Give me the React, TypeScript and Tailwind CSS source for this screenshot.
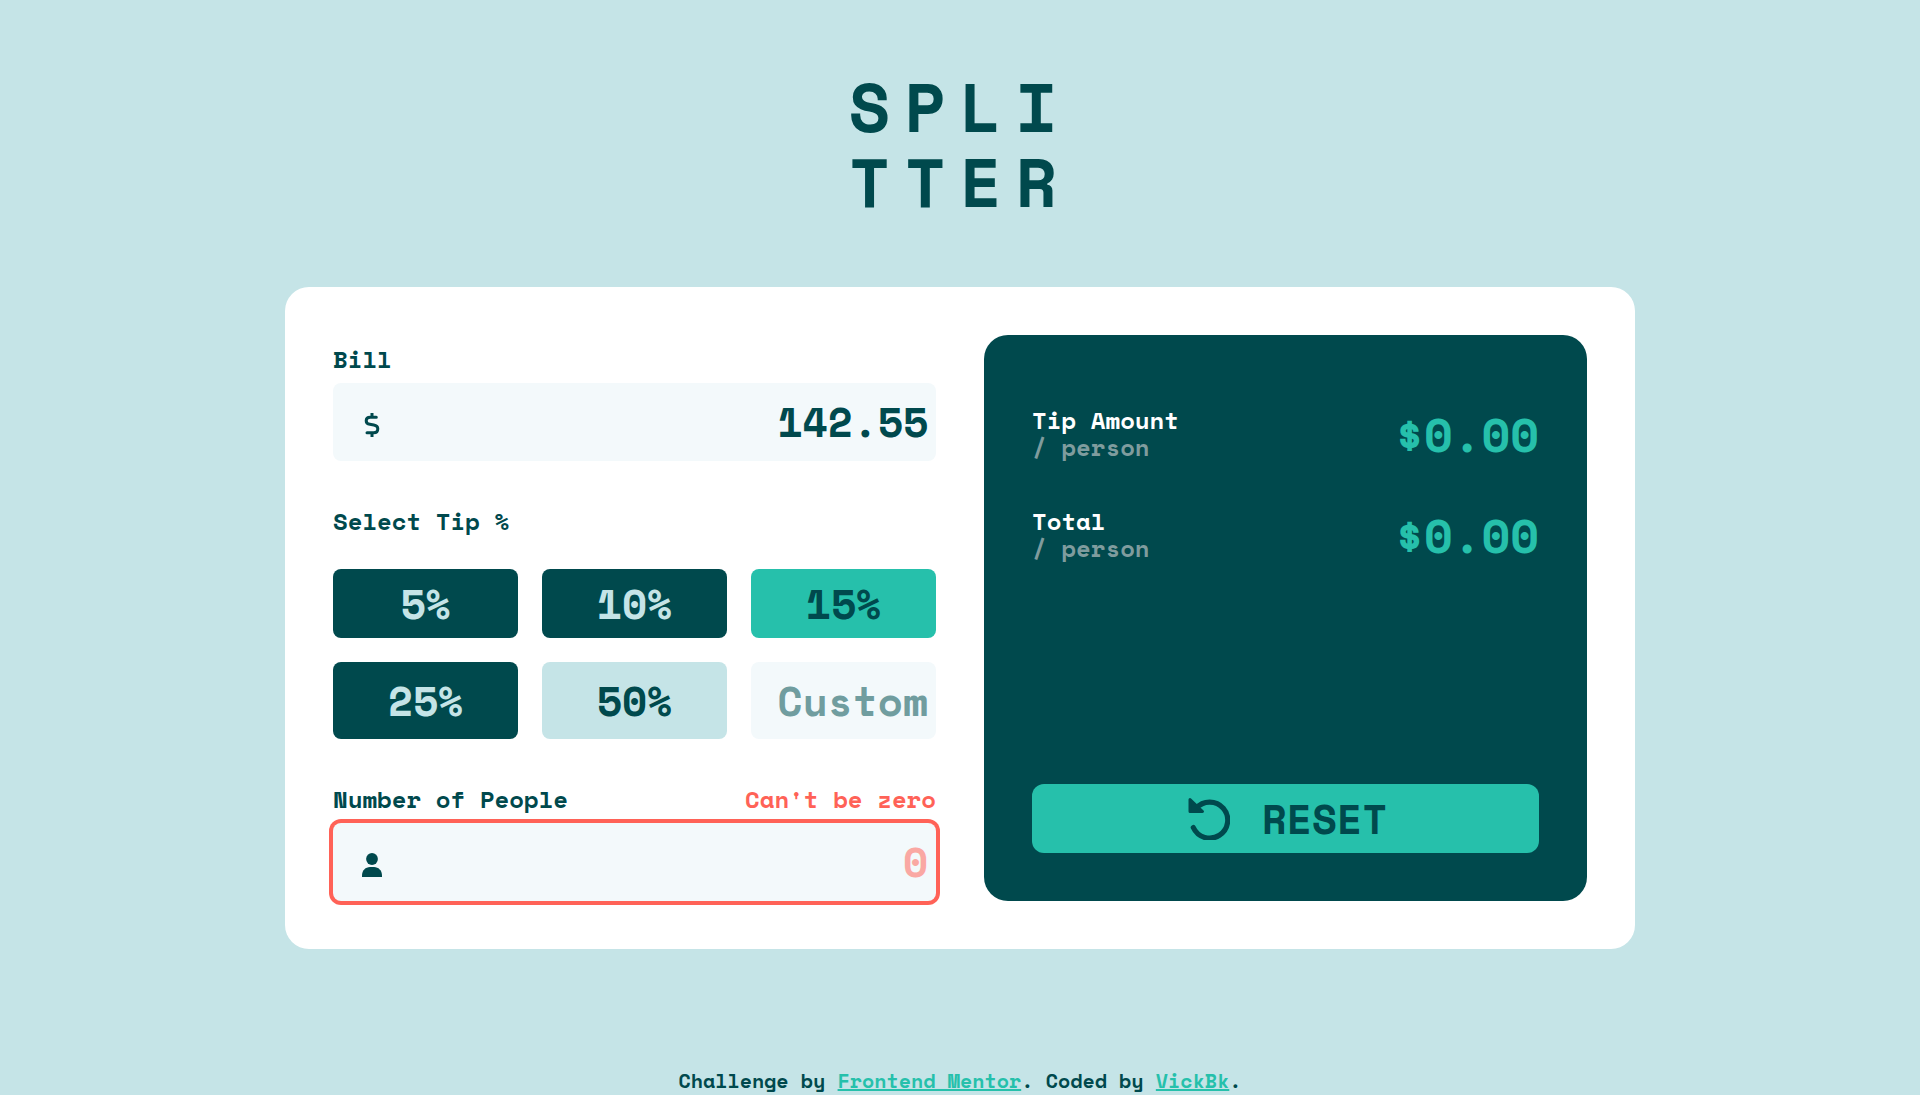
import { useState } from "react";
import type { ReactNode } from "react";

const TIPS = [5, 10, 15, 25, 50];

const TIP_STYLES: Record<string, string> = {
  normal: "bg-[#00494d] text-[#c5e4e7] hover:bg-[#c5e4e7] hover:text-[#00494d]",
  active: "bg-[#26c0ab] text-[#00494d]",
  light: "bg-[#c5e4e7] text-[#00494d]",
};

const FIELD =
  "w-full rounded-lg bg-[#f3f9fb] py-2 pr-2 text-right text-[41px] text-[#00494d] outline-none";

function DollarIcon() {
  return (
    <svg viewBox="0 0 16 24" className="h-6 w-4" fill="none" stroke="currentColor" strokeWidth="3" strokeLinecap="round" strokeLinejoin="round" aria-hidden="true">
      <path d="M12.300 4.200H6.200C3.600 4.200 2.200 5.700 2.200 7.700c0 2.100 1.400 3.300 3.600 3.600l4 .6c2.500.4 4 1.600 4 3.900 0 2.400-1.600 4-4.100 4H3" />
      <path d="M8 0v4.200M8 19.800V24" strokeLinecap="butt" />
    </svg>
  );
}

function PersonIcon() {
  return (
    <svg viewBox="0 0 20 24" className="h-6 w-5" fill="currentColor" aria-hidden="true">
      <circle cx="10" cy="6" r="5.900" />
      <path d="M0 24v-1.500C0 17.500 3.500 14 8 14h4c4.500 0 8 3.500 8 8.500V24Z" />
    </svg>
  );
}

function ResetIcon() {
  return (
    <svg viewBox="0 0 42 42" className="size-[42px]" aria-hidden="true">
      <path d="M8 10.500A18 18 0 1 1 5.300 29.500" fill="none" stroke="currentColor" strokeWidth="5.200" strokeLinecap="round" />
      <path d="M2 1.500 14.500 13.500H2Z" fill="currentColor" stroke="currentColor" strokeWidth="3" strokeLinejoin="round" />
    </svg>
  );
}

function IconField({ icon, children }: { icon: ReactNode; children: ReactNode }) {
  return (
    <div className="relative">
      <span className="pointer-events-none absolute inset-y-0 left-6 flex w-[30px] items-center justify-center pt-1.5">{icon}</span>
      {children}
    </div>
  );
}

function Amount({ title, value }: { title: string; value: string }) {
  return (
    <div className="flex items-center justify-between">
      <p className="leading-[27px] text-white">
        {title}
        <span className="block text-[#7f9c9e]">/ person</span>
      </p>
      <output className="text-[47px] leading-[54px] text-[#26c0ab]">{value}</output>
    </div>
  );
}

export default function App() {
  const [bill, setBill] = useState("142.55");
  const [tip, setTip] = useState(15);
  const [custom, setCustom] = useState("");
  const [people, setPeople] = useState("");

  const count = Number(people);
  const rate = custom ? Number(custom) : tip;
  const tipEach = count > 0 ? (Number(bill) * rate) / 100 / count : 0;
  const totalEach = count > 0 ? Number(bill) / count + tipEach : 0;

  const reset = () => {
    setBill("");
    setCustom("");
    setPeople("");
  };

  return (
    <div className="flex min-h-screen flex-col items-center bg-[#c5e4e7] px-6 font-['Space_Mono','DejaVu_Sans_Mono',monospace] text-[24px] font-bold text-[#00494d]">
      <h1 className="mt-[69px] text-[68px] leading-[75px] tracking-[14px]">
        SPLI
        <br />
        TTER
      </h1>

      <main className="mt-[68px] grid w-full max-w-[1350px] grid-cols-1 gap-12 rounded-3xl bg-white p-12 lg:grid-cols-2">
        <form onSubmit={(e) => e.preventDefault()}>
          <label htmlFor="bill" className="block leading-[48px]">Bill</label>
          <IconField icon={<DollarIcon />}>
            <input id="bill" inputMode="decimal" value={bill} onChange={(e) => setBill(e.target.value)} className={`${FIELD} leading-[62px]`} />
          </IconField>

          <fieldset className="mt-9">
            <legend className="leading-[48px]">Select Tip %</legend>
            <div className="mt-6 grid grid-cols-3 gap-6">
              {TIPS.map((t) => (
                <button
                  key={t}
                  type="button"
                  aria-pressed={t === tip}
                  onClick={() => setTip(t)}
                  className={`rounded-lg py-1 text-[41px] leading-[61px] ${TIP_STYLES[t === tip ? "active" : t === 50 ? "light" : "normal"]}`}
                >
                  {t}%
                </button>
              ))}
              <input
                aria-label="Custom tip"
                placeholder="Custom"
                value={custom}
                onChange={(e) => setCustom(e.target.value)}
                className={`${FIELD} leading-[61px] placeholder:text-[#709d9f]`}
              />
            </div>
          </fieldset>

          <div className="mt-9 flex justify-between leading-[48px]">
            <label htmlFor="people">Number of People</label>
            {count === 0 && <span role="alert" className="text-[#ff6257]">Can't be zero</span>}
          </div>
          <IconField icon={<PersonIcon />}>
            <input
              id="people"
              inputMode="numeric"
              placeholder="0"
              value={people}
              onChange={(e) => setPeople(e.target.value)}
              className={`${FIELD} leading-[62px] placeholder:text-[#faa8a3] ${count === 0 ? "ring-4 ring-[#ff6257]" : ""}`}
            />
          </IconField>
        </form>

        <section className="flex flex-col rounded-3xl bg-[#00494d] px-12 pt-[72px] pb-12">
          <div className="flex flex-col gap-[47px]">
            <Amount title="Tip Amount" value={`$${tipEach.toFixed(2)}`} />
            <Amount title="Total" value={`$${totalEach.toFixed(2)}`} />
          </div>
          <button
            type="button"
            onClick={reset}
            className="mt-auto flex items-center justify-center gap-8 rounded-xl bg-[#26c0ab] py-1 pl-1 text-[41px] leading-[61px] text-[#00494d]"
          >
            <ResetIcon />
            RESET
          </button>
        </section>
      </main>

      <footer className="mt-[120px] text-center text-[20px] leading-[24px]">
        Challenge by{" "}
        <a href="#frontend-mentor" className="text-[#26c0ab] underline">Frontend Mentor</a>. Coded by{" "}
        <a href="#vickbk" className="text-[#26c0ab] underline">VickBk</a>.
      </footer>
    </div>
  );
}
